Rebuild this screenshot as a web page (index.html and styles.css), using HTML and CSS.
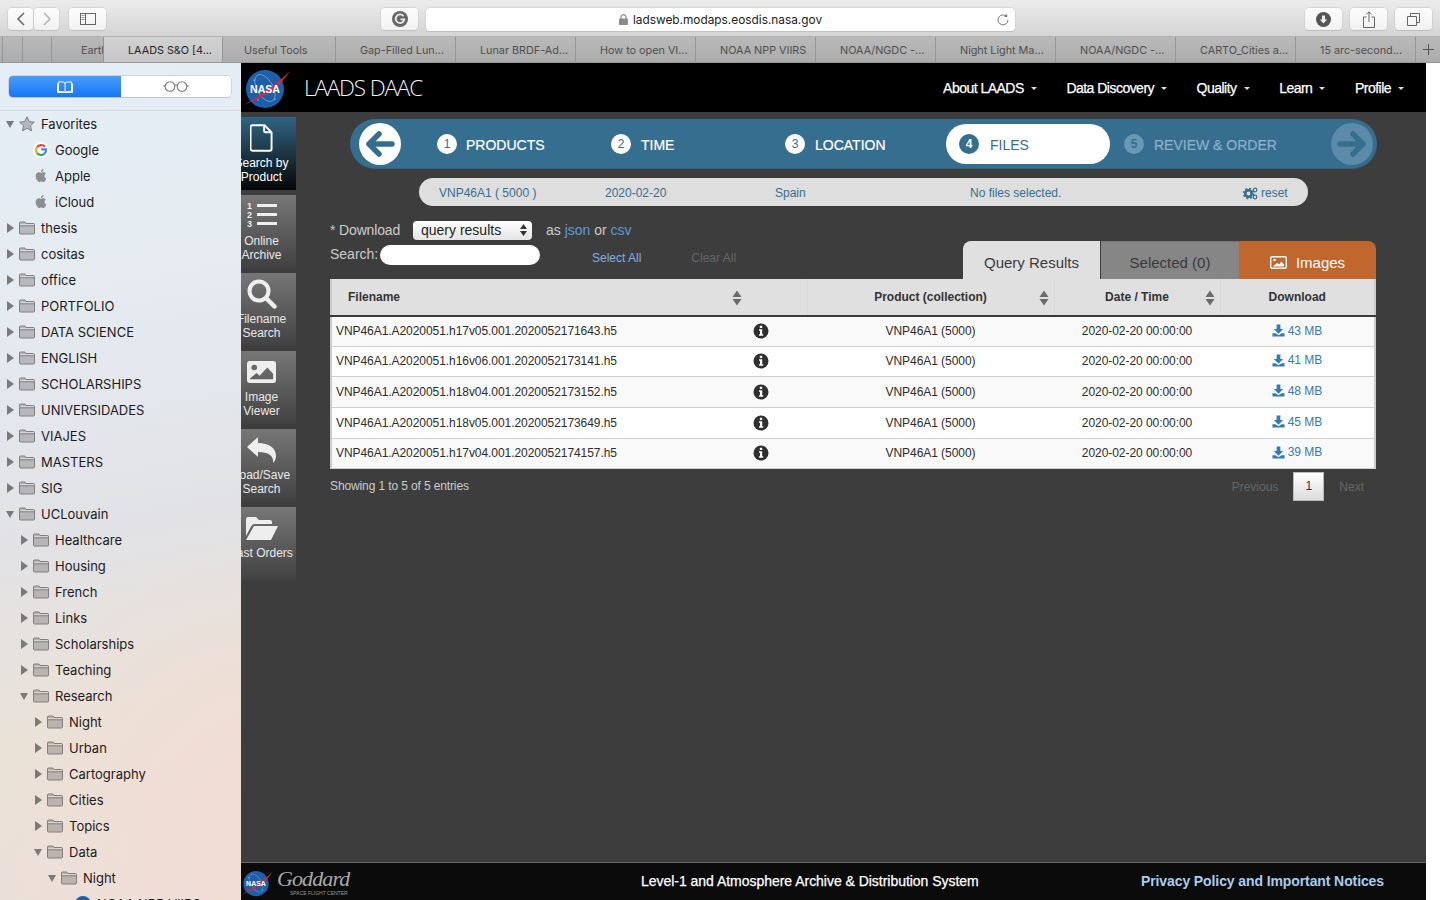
FILE: index.html
```html
<!DOCTYPE html>
<html lang="en">
<head>
<meta charset="utf-8">
<title>LAADS DAAC</title>
<link rel="stylesheet" href="styles.css">
</head>
<body>
<svg class="defs" width="0" height="0" aria-hidden="true">
  <symbol id="folder" viewBox="0 0 16 14"><path d="M.5 2A1 1 0 0 1 1.500 1H6l1 1.500h7.500a1 1 0 0 1 1 1v8.500a1 1 0 0 1-1 1h-13a1 1 0 0 1-1-1z" fill="#807d7d" fill-opacity=".45" stroke="#827f7f"/><path d="M1 3.200h14v1.300H1z" fill="#fff" fill-opacity=".55"/><path d="M.8 4.800h14.400" stroke="#827f7f" fill="none"/></symbol>
  <symbol id="apple" viewBox="0 0 24 24"><path fill="#8e8e8e" d="M12.152 6.896c-.948 0-2.415-1.078-3.96-1.04-2.04.027-3.91 1.183-4.961 3.014-2.117 3.675-.546 9.103 1.519 12.09 1.013 1.454 2.208 3.09 3.792 3.039 1.52-.065 2.09-.987 3.935-.987 1.831 0 2.35.987 3.96.948 1.637-.026 2.676-1.48 3.676-2.948 1.156-1.688 1.636-3.325 1.662-3.415-.039-.013-3.182-1.221-3.22-4.857-.026-3.04 2.48-4.494 2.597-4.559-1.429-2.09-3.623-2.324-4.39-2.376-2-.156-3.675 1.09-4.61 1.09zM15.53 3.83c.843-1.012 1.4-2.427 1.245-3.83-1.207.052-2.662.805-3.532 1.818-.78.896-1.454 2.338-1.273 3.714 1.338.104 2.715-.688 3.559-1.701"/></symbol>
  <symbol id="info" viewBox="0 0 16 16"><circle cx="8" cy="8" r="7.500" fill="#2f2f2f"/><path fill="#fff" d="M6.800 2.800h2.400v2.200H6.800zM6 6.300h3.200v5h1v1.500H6v-1.500h1v-3.500H6z"/></symbol>
  <symbol id="dl" viewBox="0 0 14 14"><path fill="#337ab7" d="M5 .5h4v5h3L7 10.500 2 5.500h3zM.5 10h3.200L7 12l3.300-2h3.200v3.500H.5z"/></symbol>
  <symbol id="sort" viewBox="0 0 10 16"><path fill="#6b6b6b" d="M5 .5 9.500 7H.5zM5 15.500.5 9h9z"/></symbol>
  <symbol id="nasa" viewBox="0 0 48 44">
    <circle cx="21" cy="23" r="19" fill="#1f5fa9"/>
    <ellipse cx="21" cy="22" rx="8" ry="15" fill="none" stroke="#a9c6e8" stroke-width=".5" transform="rotate(-30 21 22)"/>
    <circle cx="10" cy="14" r=".6" fill="#fff"/><circle cx="31" cy="33" r=".6" fill="#fff"/><circle cx="14" cy="34" r=".5" fill="#fff"/>
    <path d="M0 39C14 31 31 20 46 5 37 19 25 29 9 35z" fill="#d8263a"/>
    <text x="21" y="27" text-anchor="middle" class="nasa-t">NASA</text>
  </symbol>
</svg>

<div class="app">
  <header class="toolbar">
    <div class="btn-pair">
      <span class="tb tb-nav"><svg width="10" height="14" viewBox="0 0 10 14"><path d="M8 1 2 7l6 6" fill="none" stroke="#666" stroke-width="1.500"/></svg></span>
      <span class="tb tb-nav"><svg width="10" height="14" viewBox="0 0 10 14"><path d="m2 1 6 6-6 6" fill="none" stroke="#b5b5b5" stroke-width="1.500"/></svg></span>
    </div>
    <span class="tb tb-wide tb-side"><svg width="16" height="12" viewBox="0 0 16 12"><rect x=".5" y=".5" width="15" height="11" fill="none" stroke="#666"/><path d="M5.500 0v12" stroke="#666"/><path d="M1.500 2.500h3M1.500 4.500h3M1.500 6.500h3" stroke="#999"/></svg></span>
    <span class="tb tb-wide tb-g"><svg width="16" height="16" viewBox="0 0 16 16"><circle cx="8" cy="8" r="8" fill="#666"/><path d="M11.500 5.200A4.300 4.300 0 1 0 12.300 8.300H8.500" fill="none" stroke="#eee" stroke-width="1.800"/></svg></span>
    <div class="address">
      <svg width="9" height="11" viewBox="0 0 9 11"><path d="M2 5V3.200a2.500 2.500 0 0 1 5 0V5" fill="none" stroke="#8a8a8a" stroke-width="1.200"/><rect y="4.500" width="9" height="6.500" rx="1" fill="#8a8a8a"/></svg>
      <span class="url">ladsweb.modaps.eosdis.nasa.gov</span>
      <svg class="reload" width="12" height="13" viewBox="0 0 12 13"><path d="M9.800 3.600A5 5 0 1 0 11 7" fill="none" stroke="#777"/><path d="M7 3.800 10.300 4 10 .8z" fill="#777"/></svg>
    </div>
    <span class="tb tb-wide tb-dl"><svg width="15" height="15" viewBox="0 0 15 15"><circle cx="7.500" cy="7.500" r="7.500" fill="#555"/><path d="M6 3.500h3v4h2.200L7.500 11.500 3.800 7.500H6z" fill="#eee"/></svg></span>
    <span class="tb tb-wide tb-gap"><svg width="12" height="17" viewBox="0 0 12 17"><path d="M3.500 6H.5v10.500h11V6h-3M6 11V1M3.500 3.200 6 .8l2.500 2.400" fill="none" stroke="#666"/></svg></span>
    <span class="tb tb-wide tb-gap"><svg width="13" height="13" viewBox="0 0 13 13"><path d="M.5 3.500h9v9h-9zM3.500 3.500v-3h9v9h-3" fill="none" stroke="#666"/></svg></span>
  </header>

  <nav class="tabs-bar">
    <span class="tab tab-s1"></span>
    <span class="tab tab-s2"></span>
    <span class="tab tab-s3"></span>
    <span class="tab tab-s4">Earth</span>
    <span class="tab tab-active">LAADS S&amp;O [4...</span>
    <span class="tab tab-s5">Useful Tools</span>
    <span class="tab">Gap-Filled Lun...</span>
    <span class="tab">Lunar BRDF-Ad...</span>
    <span class="tab">How to open VI...</span>
    <span class="tab">NOAA NPP VIIRS</span>
    <span class="tab">NOAA/NGDC -...</span>
    <span class="tab">Night Light Ma...</span>
    <span class="tab">NOAA/NGDC -...</span>
    <span class="tab">CARTO_Cities a...</span>
    <span class="tab">15 arc-second...</span>
    <span class="tab-plus"><svg width="11" height="11" viewBox="0 0 11 11"><path d="M5.500 0v11M0 5.500h11" stroke="#555"/></svg></span>
  </nav>

  <div class="window">
    <aside class="sidebar">
      <div class="seg-wrap">
        <div class="seg">
          <span class="seg-on"><svg width="16" height="12" viewBox="0 0 16 12"><path d="M8 2C6.500 .8 4 .6 1.500 1v9.500C4 10.200 6.500 10.300 8 11.500c1.500-1.200 4-1.300 6.500-1V1C12 .6 9.500 .8 8 2zM8 2v9.500M.5 2.500v9h15v-9" fill="none" stroke="#fff"/></svg></span>
          <span class="seg-off"><svg width="26" height="11" viewBox="0 0 26 11"><circle cx="7" cy="5.500" r="4.800" fill="none" stroke="#777" stroke-width="1.100"/><circle cx="19" cy="5.500" r="4.800" fill="none" stroke="#777" stroke-width="1.100"/><path d="M11.800 4.500c1-.6 1.400-.6 2.400 0M0 5h2M24 5h2" stroke="#777" fill="none"/></svg></span>
        </div>
      </div>
      <ul class="tree">
        <li class="row d0"><i class="ar open"></i><svg class="ic" width="16" height="16" viewBox="0 0 16 16"><path d="m8 .8 2.200 4.800 5.100.6-3.800 3.500 1 5.100L8 12.300l-4.500 2.500 1-5.100L.7 6.200l5.100-.6z" fill="#b4b8bd" stroke="#7d7f82"/></svg><span>Favorites</span></li>
        <li class="row d1"><i class="ar none"></i><svg class="ic" width="16" height="16" viewBox="0 0 16 16"><circle cx="8" cy="8" r="8" fill="#fff"/><path d="M12 4.700A5 5 0 0 0 4 5.400" fill="none" stroke="#e8443a" stroke-width="2.200"/><path d="M4.100 5A5 5 0 0 0 4 11" fill="none" stroke="#f6b60f" stroke-width="2.200"/><path d="M3.900 10.800A5 5 0 0 0 11.300 11.800" fill="none" stroke="#34a753" stroke-width="2.200"/><path d="M11.300 11.800A5 5 0 0 0 13 7.300H8.200" fill="none" stroke="#4285f4" stroke-width="2.200"/></svg><span>Google</span></li>
        <li class="row d1"><i class="ar none"></i><svg class="ic" width="16" height="16"><use href="#apple" x="1.500" y="1" width="13" height="13"/></svg><span>Apple</span></li>
        <li class="row d1"><i class="ar none"></i><svg class="ic" width="16" height="16"><use href="#apple" x="1.500" y="1" width="13" height="13"/></svg><span>iCloud</span></li>
        <li class="row d0"><i class="ar"></i><svg class="ic" width="16" height="14"><use href="#folder"/></svg><span>thesis</span></li>
        <li class="row d0"><i class="ar"></i><svg class="ic" width="16" height="14"><use href="#folder"/></svg><span>cositas</span></li>
        <li class="row d0"><i class="ar"></i><svg class="ic" width="16" height="14"><use href="#folder"/></svg><span>office</span></li>
        <li class="row d0"><i class="ar"></i><svg class="ic" width="16" height="14"><use href="#folder"/></svg><span>PORTFOLIO</span></li>
        <li class="row d0"><i class="ar"></i><svg class="ic" width="16" height="14"><use href="#folder"/></svg><span>DATA SCIENCE</span></li>
        <li class="row d0"><i class="ar"></i><svg class="ic" width="16" height="14"><use href="#folder"/></svg><span>ENGLISH</span></li>
        <li class="row d0"><i class="ar"></i><svg class="ic" width="16" height="14"><use href="#folder"/></svg><span>SCHOLARSHIPS</span></li>
        <li class="row d0"><i class="ar"></i><svg class="ic" width="16" height="14"><use href="#folder"/></svg><span>UNIVERSIDADES</span></li>
        <li class="row d0"><i class="ar"></i><svg class="ic" width="16" height="14"><use href="#folder"/></svg><span>VIAJES</span></li>
        <li class="row d0"><i class="ar"></i><svg class="ic" width="16" height="14"><use href="#folder"/></svg><span>MASTERS</span></li>
        <li class="row d0"><i class="ar"></i><svg class="ic" width="16" height="14"><use href="#folder"/></svg><span>SIG</span></li>
        <li class="row d0"><i class="ar open"></i><svg class="ic" width="16" height="14"><use href="#folder"/></svg><span>UCLouvain</span></li>
        <li class="row d1"><i class="ar"></i><svg class="ic" width="16" height="14"><use href="#folder"/></svg><span>Healthcare</span></li>
        <li class="row d1"><i class="ar"></i><svg class="ic" width="16" height="14"><use href="#folder"/></svg><span>Housing</span></li>
        <li class="row d1"><i class="ar"></i><svg class="ic" width="16" height="14"><use href="#folder"/></svg><span>French</span></li>
        <li class="row d1"><i class="ar"></i><svg class="ic" width="16" height="14"><use href="#folder"/></svg><span>Links</span></li>
        <li class="row d1"><i class="ar"></i><svg class="ic" width="16" height="14"><use href="#folder"/></svg><span>Scholarships</span></li>
        <li class="row d1"><i class="ar"></i><svg class="ic" width="16" height="14"><use href="#folder"/></svg><span>Teaching</span></li>
        <li class="row d1"><i class="ar open"></i><svg class="ic" width="16" height="14"><use href="#folder"/></svg><span>Research</span></li>
        <li class="row d2"><i class="ar"></i><svg class="ic" width="16" height="14"><use href="#folder"/></svg><span>Night</span></li>
        <li class="row d2"><i class="ar"></i><svg class="ic" width="16" height="14"><use href="#folder"/></svg><span>Urban</span></li>
        <li class="row d2"><i class="ar"></i><svg class="ic" width="16" height="14"><use href="#folder"/></svg><span>Cartography</span></li>
        <li class="row d2"><i class="ar"></i><svg class="ic" width="16" height="14"><use href="#folder"/></svg><span>Cities</span></li>
        <li class="row d2"><i class="ar"></i><svg class="ic" width="16" height="14"><use href="#folder"/></svg><span>Topics</span></li>
        <li class="row d2"><i class="ar open"></i><svg class="ic" width="16" height="14"><use href="#folder"/></svg><span>Data</span></li>
        <li class="row d3"><i class="ar open"></i><svg class="ic" width="16" height="14"><use href="#folder"/></svg><span>Night</span></li>
        <li class="row d4"><i class="ar none"></i><svg class="ic" width="16" height="16" viewBox="0 0 16 16"><circle cx="8" cy="8" r="8" fill="#1f5fa9"/></svg><span>NOAA NPP VIIRS</span></li>
      </ul>
    </aside>

    <div class="web">
      <header class="site-head">
        <svg class="logo" width="48" height="44"><use href="#nasa" width="48" height="44"/></svg>
        <span class="brand">LAADS DAAC</span>
        <ul class="site-nav">
          <li>About LAADS<i class="caret"></i></li>
          <li>Data Discovery<i class="caret"></i></li>
          <li>Quality<i class="caret"></i></li>
          <li>Learn<i class="caret"></i></li>
          <li>Profile<i class="caret"></i></li>
        </ul>
      </header>

      <div class="content">
        <div class="tiles">
          <a class="tile tile-on"><span class="tile-ic"><svg width="23" height="28" viewBox="0 0 26 32"><path d="M2.500 1.500h14l8 8v19a2 2 0 0 1-2 2h-20a2 2 0 0 1-2-2v-25a2 2 0 0 1 2-2zM16 1.500v6.500a1.500 1.500 0 0 0 1.500 1.500h7" fill="none" stroke="#fff" stroke-width="2.200"/></svg></span><span>Search by</span><span>Product</span></a>
          <a class="tile"><span class="tile-ic"><svg width="30" height="28" viewBox="0 0 30 28"><path fill="#eee" d="M10 2h20v3H10zM10 11h20v3H10zM10 20h20v3H10z"/><text x="0" y="6.500" class="ol-n">1</text><text x="0" y="15.500" class="ol-n">2</text><text x="0" y="24.500" class="ol-n">3</text></svg></span><span>Online</span><span>Archive</span></a>
          <a class="tile"><span class="tile-ic"><svg width="30" height="30" viewBox="0 0 30 30"><circle cx="12" cy="12" r="9.500" fill="none" stroke="#eee" stroke-width="4"/><path d="m19 19 8.500 8.500" stroke="#eee" stroke-width="4.500" stroke-linecap="round"/></svg></span><span>Filename</span><span>Search</span></a>
          <a class="tile"><span class="tile-ic"><svg width="29" height="22" viewBox="0 0 30 24" preserveAspectRatio="none"><path fill-rule="evenodd" fill="#eee" d="M3 0h24a3 3 0 0 1 3 3v18a3 3 0 0 1-3 3H3a3 3 0 0 1-3-3V3a3 3 0 0 1 3-3zM7.500 4a3 3 0 1 0 0 6 3 3 0 0 0 0-6zM3 20h24v-6l-6-7-8 9-3-3-7 6z"/></svg></span><span>Image</span><span>Viewer</span></a>
          <a class="tile"><span class="tile-ic"><svg width="30" height="26" viewBox="0 0 30 26"><path fill="#eee" d="M0 10 11 0v6c11 0 18 5 18 13 0 3-1 5-3 7 1-6-3-11-15-11v5z"/></svg></span><span>Load/Save</span><span>Search</span></a>
          <a class="tile"><span class="tile-ic"><svg width="32" height="24" viewBox="0 0 32 24"><path fill="#eee" d="M0 20V3a2 2 0 0 1 2-2h8l3 3h11a2 2 0 0 1 2 2v2H9a4 4 0 0 0-4 2.500zM8 10h24L25 24H0z"/></svg></span><span>Last Orders</span></a>
        </div>

        <main class="main">
          <div class="stepper">
            <span class="round round-back"><svg width="42" height="42" viewBox="0 0 42 42"><path d="M33 21H10M20 11 10 21l10 10" fill="none" stroke="#366e8f" stroke-width="5.500" stroke-linecap="round" stroke-linejoin="round"/></svg></span>
            <span class="step step-first"><b class="num">1</b><span class="lbl">PRODUCTS</span></span>
            <span class="step"><b class="num">2</b><span class="lbl">TIME</span></span>
            <span class="step"><b class="num">3</b><span class="lbl">LOCATION</span></span>
            <span class="step step-active"><b class="num">4</b><span class="lbl">FILES</span></span>
            <span class="step step-off"><b class="num">5</b><span class="lbl">REVIEW &amp; ORDER</span></span>
            <span class="round round-next"><svg width="42" height="42" viewBox="0 0 42 42"><path d="M9 21h23M22 11l10 10-10 10" fill="none" stroke="#366e8f" stroke-width="5.500" stroke-linecap="round" stroke-linejoin="round"/></svg></span>
          </div>

          <div class="summary">
            <span class="s1">VNP46A1 ( 5000 )</span>
            <span class="s2">2020-02-20</span>
            <span class="s3">Spain</span>
            <span class="s4">No files selected.</span>
            <span class="s5"><svg width="15" height="13" viewBox="0 0 15 13"><circle cx="5.500" cy="6.500" r="3.200" fill="none" stroke="#366e8f" stroke-width="2.600"/><circle cx="5.500" cy="6.500" r="5" fill="none" stroke="#366e8f" stroke-width="1.600" stroke-dasharray="2 1.930"/><circle cx="12" cy="3" r="1.800" fill="none" stroke="#366e8f" stroke-width="1.200"/><circle cx="12" cy="10" r="1.800" fill="none" stroke="#366e8f" stroke-width="1.200"/></svg>reset</span>
          </div>

          <div class="tools">
            <div class="tools-left">
              <div class="dl-row">
                <span class="dl-label">* Download</span>
                <span class="fake-select"><span>query results</span><svg width="7" height="12" viewBox="0 0 7 12"><path fill="#333" d="M3.500 0 7 5H0zM3.500 12 0 7h7z"/></svg></span>
                <span class="dl-as">as <a class="lnk">json</a> or <a class="lnk">csv</a></span>
              </div>
              <div class="search-row">
                <label class="search-label" for="q">Search:</label>
                <input class="search-input" id="q" type="text">
                <a class="sel-all">Select All</a>
                <a class="clr-all">Clear All</a>
              </div>
            </div>
            <div class="rtabs">
              <span class="rtab rtab-q">Query Results</span>
              <span class="rtab rtab-s">Selected (0)</span>
              <span class="rtab rtab-i"><svg width="17" height="13" viewBox="0 0 17 13"><rect x=".7" y=".7" width="15.600" height="11.600" rx="1.500" fill="none" stroke="#fff" stroke-width="1.400"/><circle cx="4.500" cy="4" r="1.300" fill="#fff"/><path d="M3 10.500 7 7l2 1.500L11.500 5.500 14 8.500v2z" fill="#fff"/></svg>Images</span>
            </div>
          </div>

          <table class="grid">
            <colgroup><col class="c1"><col class="c2"><col class="c3"><col class="c4"><col class="c5"></colgroup>
            <thead>
              <tr>
                <th colspan="2" class="th-file">Filename<svg class="sort s-a" width="10" height="16"><use href="#sort"/></svg></th>
                <th>Product (collection)<svg class="sort s-b" width="10" height="16"><use href="#sort"/></svg></th>
                <th>Date / Time<svg class="sort s-c" width="10" height="16"><use href="#sort"/></svg></th>
                <th>Download</th>
              </tr>
            </thead>
            <tbody>
              <tr class="r-a"><td class="fn">VNP46A1.A2020051.h17v05.001.2020052171643.h5</td><td class="ctr"><svg class="inf" width="16" height="16"><use href="#info"/></svg></td><td class="ctr">VNP46A1 (5000)</td><td class="ctr">2020-02-20 00:00:00</td><td class="ctr"><a class="size"><svg width="13" height="13"><use href="#dl"/></svg>43 MB</a></td></tr>
              <tr class="r-b"><td class="fn">VNP46A1.A2020051.h16v06.001.2020052173141.h5</td><td class="ctr"><svg class="inf" width="16" height="16"><use href="#info"/></svg></td><td class="ctr">VNP46A1 (5000)</td><td class="ctr">2020-02-20 00:00:00</td><td class="ctr"><a class="size"><svg width="13" height="13"><use href="#dl"/></svg>41 MB</a></td></tr>
              <tr class="r-a tall"><td class="fn">VNP46A1.A2020051.h18v04.001.2020052173152.h5</td><td class="ctr"><svg class="inf" width="16" height="16"><use href="#info"/></svg></td><td class="ctr">VNP46A1 (5000)</td><td class="ctr">2020-02-20 00:00:00</td><td class="ctr"><a class="size"><svg width="13" height="13"><use href="#dl"/></svg>48 MB</a></td></tr>
              <tr class="r-b tall"><td class="fn">VNP46A1.A2020051.h18v05.001.2020052173649.h5</td><td class="ctr"><svg class="inf" width="16" height="16"><use href="#info"/></svg></td><td class="ctr">VNP46A1 (5000)</td><td class="ctr">2020-02-20 00:00:00</td><td class="ctr"><a class="size"><svg width="13" height="13"><use href="#dl"/></svg>45 MB</a></td></tr>
              <tr class="r-a"><td class="fn">VNP46A1.A2020051.h17v04.001.2020052174157.h5</td><td class="ctr"><svg class="inf" width="16" height="16"><use href="#info"/></svg></td><td class="ctr">VNP46A1 (5000)</td><td class="ctr">2020-02-20 00:00:00</td><td class="ctr"><a class="size"><svg width="13" height="13"><use href="#dl"/></svg>39 MB</a></td></tr>
            </tbody>
          </table>

          <div class="pager-row">
            <span class="showing">Showing 1 to 5 of 5 entries</span>
            <div class="pager"><span>Previous</span><b class="page">1</b><span>Next</span></div>
          </div>
        </main>
      </div>

      <footer class="site-foot">
        <svg class="foot-logo" width="32" height="30"><use href="#nasa" width="32" height="30"/></svg>
        <span class="goddard"><em>Goddard</em><small>SPACE FLIGHT CENTER</small></span>
        <span class="foot-title">Level-1 and Atmosphere Archive &amp; Distribution System</span>
        <a class="foot-link">Privacy Policy and Important Notices</a>
      </footer>
    </div>
    <div class="strip"></div>
  </div>
</div>
</body>
</html>
```

FILE: styles.css
```css
* { box-sizing: border-box; }
html, body { margin: 0; padding: 0; height: 100%; overflow: hidden; }
body { font-family: "Liberation Sans", Arial, sans-serif; background: #fff; }
.defs { position: absolute; }
.nasa-t { font: bold 10.500px "Liberation Sans", sans-serif; fill: #fff; }
.ol-n { font: bold 9px "Liberation Sans", sans-serif; fill: #eee; }
a { cursor: pointer; }

.app { width: 1440px; height: 900px; display: flex; flex-direction: column; overflow: hidden; }

/* Browser toolbar */
.toolbar { height: 37px; flex: none; display: flex; align-items: flex-start; padding: 8px 8px 0; background: linear-gradient(#ececec, #d4d4d4); border-bottom: 1px solid #b0b0b0; }
.btn-pair { display: flex; gap: 1px; }
.tb { height: 22px; display: flex; align-items: center; justify-content: center; background: linear-gradient(#fdfdfd, #f1f1f1); border-radius: 4px; box-shadow: 0 0 0 .5px #c4c4c4, 0 1px 0 #bdbdbd; }
.tb-nav { width: 25px; }
.tb-wide { width: 37px; }
.tb-side { margin-left: 10px; }
.tb-g { margin-left: 275px; }
.address { width: 589px; height: 23px; margin-left: 8px; margin-right: 290px; position: relative; display: flex; align-items: center; justify-content: center; gap: 5px; background: #fff; border-radius: 4px; box-shadow: 0 0 0 .5px #c8c8c8, 0 1px 0 #bdbdbd; }
.url { font: 11.850px Inter, "Liberation Sans", sans-serif; color: #222; }
.reload { position: absolute; right: 6px; top: 5px; }
.tb-gap { margin-left: 8px; }
.tb-dl { margin-left: 0; }

/* Browser tabs */
.tabs-bar { height: 26px; flex: none; display: flex; background: linear-gradient(#b9b9b9, #acacac); border-bottom: 1px solid #969696; }
.tab { width: 120px; flex: none; display: flex; align-items: center; padding: 1px 0 0 24px; font: 10.800px Inter, "Liberation Sans", sans-serif; color: #4f4f4f; white-space: nowrap; overflow: hidden; border-right: 1px solid #969696; }
.tab-s1 { width: 3px; padding: 0; }
.tab-s2 { width: 20px; padding: 0; }
.tab-s3 { width: 29px; padding: 0; }
.tab-s4 { width: 52px; padding-left: 29px; }
.tab-s5 { width: 113px; padding-left: 21px; }
.tab-active { width: 119px; background: linear-gradient(#d2d2d2, #c6c6c6); color: #1f1f1f; }
.tab-plus { flex: 1; display: flex; align-items: center; justify-content: center; }

/* Window */
.window { flex: 1; min-height: 0; display: flex; }
.strip { width: 14px; background: #fff; flex: none; }

/* Sidebar */
.sidebar { width: 241px; flex: none; overflow: hidden; background:
  radial-gradient(circle at 115% 92%, #f3dcd3 0, rgba(243,220,211,0) 36%),
  linear-gradient(170deg, #e4eef6 0, #e5ebf1 28%, #e2e2e6 55%, #eae2d7 78%, #ebe0da 100%); }
.seg-wrap { height: 48px; padding: 13px 9px 0; border-bottom: 1px solid #d3d6da; }
.seg { height: 21px; width: 222px; display: flex; border-radius: 4px; overflow: hidden; box-shadow: 0 0 0 .5px #bbb, 0 1px 0 #c4c4c4; }
.seg-on { width: 112px; display: flex; align-items: center; justify-content: center; background: linear-gradient(#4a9cfb, #1577f5); }
.seg-off { flex: 1; display: flex; align-items: center; justify-content: center; background: #fff; }
.tree { list-style: none; margin: 0; padding: 0; }
.row { height: 26px; display: flex; align-items: center; font: 13px Inter, "Liberation Sans", sans-serif; color: #1c1c1c; white-space: nowrap; }
.row span { margin-left: 6px; }
.d0 { padding-left: 6px; }
.d1 { padding-left: 20px; }
.d2 { padding-left: 34px; }
.d3 { padding-left: 48px; }
.d4 { padding-left: 62px; }
.ar { width: 10px; height: 10px; flex: none; margin-right: 3px; position: relative; }
.ar::before { content: ""; position: absolute; left: 1px; top: 0; border-left: 7px solid #7b7979; border-top: 5px solid transparent; border-bottom: 5px solid transparent; }
.ar.open::before { left: 0; top: 2px; border-top: 7px solid #7b7979; border-left: 4.500px solid transparent; border-right: 4.500px solid transparent; border-bottom: 0; }
.ar.none::before { display: none; }
.ic { flex: none; }

/* Site */
.web { flex: 1; min-width: 0; display: flex; flex-direction: column; background: #3d3d3d; }
.site-head { height: 49px; flex: none; background: #000; display: flex; align-items: center; padding-left: 3px; color: #fff; }
.logo { flex: none; }
.brand { margin-left: 12px; font: 300 22.500px "Open Sans", sans-serif; letter-spacing: -1.15px; color: #f4f4f4; }
.site-nav { list-style: none; margin: 0 22px 0 auto; padding: 0; display: flex; gap: 29.600px; font-size: 14px; letter-spacing: -.52px; -webkit-text-stroke: .25px #fff; }
.site-nav li { display: flex; align-items: center; white-space: nowrap; }
.caret { width: 0; height: 0; margin-left: 7px; margin-top: 2px; border-top: 3px solid #ddd; border-left: 3.500px solid transparent; border-right: 3.500px solid transparent; }

.content { flex: 1; min-height: 0; display: flex; }
.tiles { width: 55px; flex: none; padding-top: 5px; display: flex; flex-direction: column; gap: 5px; }
.tile { height: 73px; display: flex; flex-direction: column; align-items: center; padding-right: 14px; overflow: hidden; font-size: 12px; line-height: 14px; color: #e8e8e8; white-space: nowrap; background: linear-gradient(#777, #414141); }
.tile-on { background: linear-gradient(#2f6583, #060606); color: #fff; }
.tile-ic { height: 39px; flex: none; display: flex; align-items: center; justify-content: center; padding-top: 2px; }

.main { flex: 1; min-width: 0; margin-left: 34px; margin-right: 50px; }
.stepper { margin: 7px -1px 0 20px; height: 50px; border-radius: 25px; background: #366e8f; display: flex; align-items: center; padding: 0 4px 0 9px; color: #fff; font-size: 14px; box-shadow: inset 0 -1px 0 rgba(0,0,0,.1); }
.round { width: 42px; height: 42px; border-radius: 50%; flex: none; }
.round-back { background: #fff; margin-right: 36px; }
.round-next { background: #5b8ba8; margin-left: auto; }
.step { width: 174px; flex: none; display: flex; align-items: center; gap: 10px; -webkit-text-stroke: .2px currentColor; }
.step-first { gap: 9px; }
.lbl { margin-top: 2px; }
.num { width: 20px; height: 20px; border-radius: 50%; display: flex; align-items: center; justify-content: center; font-size: 12px; font-weight: normal; background: #fff; color: #366e8f; -webkit-text-stroke: 0; flex: none; }
.step-active { width: 164px; height: 40px; gap: 11px; margin: 0 14px 0 -13px; padding-left: 13px; border-radius: 20px; background: #fff; color: #366e8f; -webkit-text-stroke: 0; }
.step-active .num { background: #366e8f; color: #fff; font-weight: bold; }
.step-off { width: 190px; color: #8fb0c6; }
.step-off .num { background: #6a97b1; font-weight: bold; }

.summary { margin: 9px 0 0 89px; width: 889px; height: 28px; border-radius: 14px; background: #dedede; display: flex; align-items: center; padding: 2px 0 0 20px; font-size: 12px; color: #366e8f; }
.s1 { width: 166px; }
.s2 { width: 170px; }
.s3 { width: 195px; }
.s4 { width: 273px; }
.s5 { display: flex; align-items: center; gap: 3px; }

.tools { height: 73px; display: flex; justify-content: space-between; align-items: flex-end; }
.tools-left { align-self: flex-start; padding-top: 15px; }
.dl-row { height: 19px; display: flex; align-items: center; font-size: 14px; color: #ccc; }
.dl-label { width: 83px; margin-bottom: 2px; letter-spacing: -.15px; }
.fake-select { width: 119px; height: 19px; display: flex; align-items: center; justify-content: space-between; padding: 0 5px 2px 8px; background: linear-gradient(#fff, #e4e4e4); border-radius: 4px; color: #222; }
.dl-as { margin-left: 14px; margin-bottom: 2px; }
.lnk { color: #5f9bd0; }
.search-row { height: 20px; margin-top: 5px; display: flex; align-items: center; font-size: 14px; color: #ccc; }
.search-label { width: 50px; margin-bottom: 2px; }
.search-input { width: 160px; height: 20px; border: 0; padding: 0 8px; border-radius: 10px; background: #fff; outline: 0; }
.sel-all { margin-left: 52px; margin-top: 6px; font-size: 12px; color: #7fb2e5; }
.clr-all { margin-left: 50px; margin-top: 6px; font-size: 12px; color: #666; }
.rtabs { display: flex; }
.rtab { width: 138px; height: 38px; display: flex; align-items: center; justify-content: center; padding-top: 4px; font-size: 15px; }
.rtab-q { width: 137px; margin-right: 1px; background: #e0e0e0; color: #3c3c3c; border-top-left-radius: 8px; }
.rtab-s { padding-top: 3px; background: #868686; color: #3a3a3a; border-top: 1px solid #777; }
.rtab-i { width: 137px; gap: 9px; background: #c1672d; color: #fff; border-top-right-radius: 8px; }

.grid { width: 1044px; table-layout: fixed; border-collapse: collapse; font-size: 12px; color: #2d2d2d; }
.c1 { width: 384px; }
.c2 { width: 92px; }
.c3 { width: 247px; }
.c4 { width: 166px; }
.c5 { width: 155px; }
.grid th { height: 37px; position: relative; padding: 0; background: #e0e0e0; color: #333; border-bottom: 2px solid #3a3a3a; border-left: 1px solid #d9d9d9; font-size: 12px; }
.grid .th-file { text-align: left; padding-left: 16px; border-left: 2px solid #ccc; }
.sort { position: absolute; top: 11px; }
.s-a { left: 400px; }
.s-b { left: 231px; }
.s-c { left: 150px; }
.grid td { height: 30px; padding: 0; border-bottom: 1px solid #cfcfcf; letter-spacing: -.06px; }
.tall td { height: 31px; }
.r-a td { background: #f9f9f9; }
.r-b td { background: #fff; }
.grid .fn { padding-left: 4px; border-left: 2px solid #ccc; white-space: nowrap; }
.grid tr > td:last-child, .grid tr > th:last-child { border-right: 2px solid #ccc; }
.ctr { text-align: center; }
.inf { vertical-align: middle; }
.size { display: inline-flex; align-items: center; gap: 3px; color: #337ab7; vertical-align: -1px; letter-spacing: 0; }

.pager-row { display: flex; justify-content: space-between; align-items: flex-start; font-size: 12px; }
.showing { margin-top: 10px; color: #ccc; letter-spacing: -.12px; }
.pager { display: flex; align-items: center; margin-top: 3px; margin-right: 12px; gap: 15px; color: #666; }
.pager span { padding-top: 2px; }
.page { width: 31px; height: 29px; display: flex; align-items: center; justify-content: center; font-weight: normal; color: #333; background: linear-gradient(#fff, #dcdcdc); border: 1px solid #bbb; }

.site-foot { height: 38px; flex: none; display: flex; align-items: center; background: #0b0b0b; border-top: 1px solid #666; color: #fff; font-size: 14px; }
.foot-logo { flex: none; margin: 3px 0 0 1px; }
.goddard { width: 76px; margin-left: 3px; height: 32px; display: flex; flex-direction: column; color: #a8a8a8; line-height: 1; flex: none; }
.goddard em { font: italic 22px "Liberation Serif", serif; letter-spacing: -.9px; height: 25px; white-space: nowrap; }
.goddard small { font-size: 5px; margin-left: 13px; white-space: nowrap; color: #999; }
.foot-title { margin-left: 288px; margin-bottom: 2px; white-space: nowrap; letter-spacing: -.03px; -webkit-text-stroke: .25px #fff; }
.foot-link { margin-left: auto; margin-right: 42px; margin-bottom: 2px; white-space: nowrap; color: #a8cdee; letter-spacing: -.1px; font-weight: bold; }
```
